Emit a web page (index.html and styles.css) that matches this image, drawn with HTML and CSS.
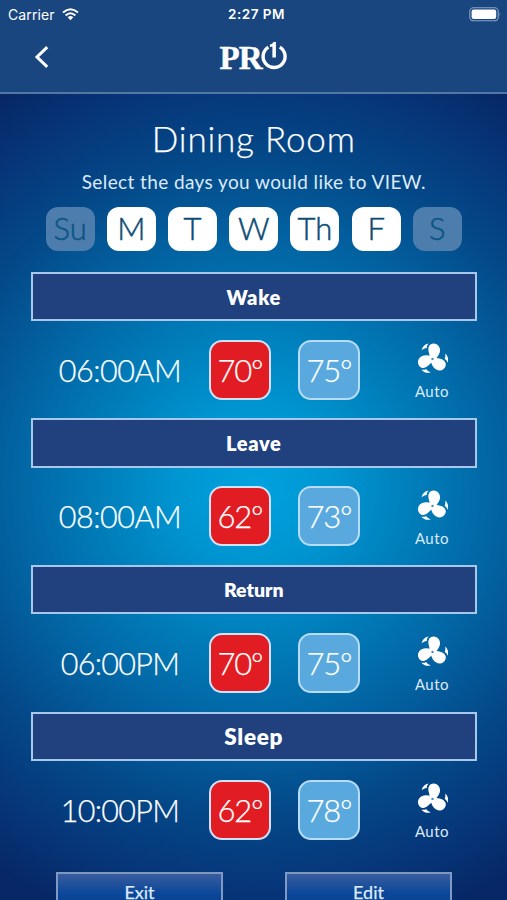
FILE: index.html
```html
<!DOCTYPE html>
<html lang="en">
<head>
<meta charset="utf-8">
<title>Dining Room schedule</title>
<link rel="stylesheet" href="styles.css">
</head>
<body>
<svg width="0" height="0" class="defs" aria-hidden="true">
  <symbol id="fan" viewBox="0 0 31 31">
    <g id="blade">
      <path d="M12.6 16C13.7 11.5 9.8 8 12 3.2C13.6 -.2 19.4 -.3 21.8 3.2C24.6 7.4 22.4 12.5 18.4 16Z"/>
      <path d="M4.6 7.4C5.3 3.7 7.9 1.3 11.6 .6C10 2.3 9.8 3.5 9.8 5C7.7 5.2 6.1 6 4.6 7.4Z"/>
    </g>
    <use href="#blade" transform="rotate(120 15.5 15.7)"/>
    <use href="#blade" transform="rotate(240 15.5 15.7)"/>
    <circle cx="15.5" cy="15.9" r="1.2" fill="#3f8fc5"/>
  </symbol>
</svg>
<header class="top">
  <div class="status">
    <div class="carrier"><span>Carrier</span>
      <svg width="17" height="13" viewBox="0 0 17 13" fill="none" stroke="#fff" stroke-width="2"><path d="M1 4.6Q8.5-2.2 16 4.6M3.6 7.4Q8.5 3 13.4 7.4"/><path d="M5.7 9.2Q8.5 7 11.3 9.2L8.5 12.2Z" fill="#fff" stroke="none"/></svg>
    </div>
    <span class="clock">2:27 PM</span>
    <svg class="battery" width="33" height="15" viewBox="0 0 33 15"><rect x=".8" y=".8" width="28.4" height="13" rx="3.6" fill="none" stroke="#8ba5c8" stroke-width="1.1"/><rect x="2.6" y="2.6" width="24.6" height="9.4" rx="2" fill="#fff"/><path d="M30.6 5Q32.2 7.3 30.6 9.6Z" fill="#8ba5c8"/></svg>
  </div>
  <div class="nav">
    <svg class="back" width="16" height="24" viewBox="0 0 16 24"><path d="M13.2 2.2L3 12L13.2 21.8" fill="none" stroke="#fff" stroke-width="3"/></svg>
    <div class="logo"><span>PR</span><svg width="28" height="29" viewBox="0 0 28 29"><path d="M8.4 6.1A11 11 0 1 0 19.8 6.1" fill="none" stroke="#fff" stroke-width="3.4"/><path d="M15.9 1V16.4H12.4V5.4L9.9 6V3.6C11.6 3.2 12.8 2.3 13.4 1Z" fill="#fff"/></svg></div>
  </div>
</header>
<main>
  <h1>Dining Room</h1>
  <p class="hint">Select the days you would like to VIEW.</p>
  <div class="days">
    <span class="day off">Su</span><span class="day">M</span><span class="day">T</span><span class="day">W</span><span class="day">Th</span><span class="day">F</span><span class="day off">S</span>
  </div>
  <section><h2>Wake</h2>
    <div class="row"><span class="time">06:00AM</span><span class="temp heat">70º</span><span class="temp cool">75º</span><div class="fan"><svg width="31" height="31"><use href="#fan"/></svg><span>Auto</span></div></div>
  </section>
  <section><h2>Leave</h2>
    <div class="row"><span class="time">08:00AM</span><span class="temp heat">62º</span><span class="temp cool">73º</span><div class="fan"><svg width="31" height="31"><use href="#fan"/></svg><span>Auto</span></div></div>
  </section>
  <section><h2 class="return">Return</h2>
    <div class="row"><span class="time pm">06:00PM</span><span class="temp heat">70º</span><span class="temp cool">75º</span><div class="fan"><svg width="31" height="31"><use href="#fan"/></svg><span>Auto</span></div></div>
  </section>
  <section><h2 class="large">Sleep</h2>
    <div class="row"><span class="time pm">10:00PM</span><span class="temp heat">62º</span><span class="temp cool">78º</span><div class="fan"><svg width="31" height="31"><use href="#fan"/></svg><span>Auto</span></div></div>
  </section>
  <div class="actions"><button>Exit</button><button>Edit</button></div>
</main>
</body>
</html>
```
FILE: styles.css
```css
* { box-sizing: border-box; }
body {
  margin: 0;
  height: 900px;
  overflow: hidden;
  color: #fff;
  font-family: Lato, "Liberation Sans", sans-serif;
  font-weight: 300;
  background: radial-gradient(circle at 256px 485px, #00a2df 0, #0095d1 80px, #007cb8 165px, #0362a1 250px, #044888 330px, #06387b 395px, #072766 465px);
}
.defs { position: absolute; }
.top { height: 94px; background: #1a467f; border-bottom: 2px solid #5478a5; }
.status {
  height: 28px;
  display: grid;
  grid-template-columns: 1fr auto 1fr;
  align-items: center;
  padding: 0 5px 0 8px;
  font: 400 14px Inter, sans-serif;
}
.carrier { display: flex; align-items: center; gap: 7px; letter-spacing: .1px; }
.clock { font-weight: 600; font-size: 13.5px; letter-spacing: .5px; padding-left: 3px; }
.battery { justify-self: end; }
.nav { display: grid; grid-template-columns: 1fr auto 1fr; align-items: center; height: 58px; }
.back { margin-left: 34px; }
.logo { display: flex; align-items: center; font: bold 33px/30px "Liberation Serif", serif; letter-spacing: -1px; -webkit-text-stroke: .4px; }
.logo span { margin-top: 1px; }
.logo svg { margin: -3px 0 0 -2px; }
main { padding: 0 30.5px 0 31px; -webkit-text-stroke: .25px; }
h1 { margin: 0; padding-top: 23px; font-weight: 300; font-size: 35px; line-height: 42px; text-align: center; letter-spacing: .8px; }
.hint { margin: 10px 0 0; font-size: 19px; line-height: 26px; font-weight: 400; text-align: center; letter-spacing: .4px; color: #dceafa; -webkit-text-stroke: 0; }
.days { display: flex; gap: 12.2px; justify-content: center; margin-top: 12px; }
.day { width: 49px; height: 44px; border-radius: 12px; background: #fff; color: #0c4c75; font-size: 31px; line-height: 43px; text-align: center; -webkit-text-stroke: .5px; }
.off { background: #4c7dad; color: #0c5585; }
section { height: 146.7px; }
.days + section { margin-top: 20.5px; }
h2 {
  margin: 0;
  height: 49.5px;
  border: 2px solid #a7c8ea;
  background: #20417d;
  font-size: 20px;
  font-weight: 800;
  line-height: 46px;
  text-align: center;
  letter-spacing: .7px;
  -webkit-text-stroke: 0;
}
.return { font-size: 19.5px; letter-spacing: 0; }
.large { font-size: 22.5px; }
.row { display: flex; align-items: center; height: 97px; }
.time { width: 178px; text-align: center; font-size: 30.5px; letter-spacing: -.5px; }
.pm { letter-spacing: -.7px; }
.temp { width: 62px; height: 60px; border: 2px solid #cfe2f7; border-radius: 13px; font-size: 31px; line-height: 56px; text-align: center; letter-spacing: -1.2px; }
.heat { background: #e11d23; }
.cool { margin-left: 27px; background: #59a9df; border-color: #b8dcf6; }
.fan { display: flex; flex-direction: column; align-items: center; width: 62px; margin: 5px 0 0 41px; }
.fan svg { fill: #fff; }
.fan span { margin-top: 7px; font-size: 15px; line-height: 20px; font-weight: 400; letter-spacing: .5px; color: #dceafa; -webkit-text-stroke: 0; }
.actions { display: flex; gap: 62px; margin: 13.5px 0 0 25px; }
button {
  width: 167px;
  height: 44px;
  padding: 0 0 4px;
  border: 2px solid #8099c3;
  background: linear-gradient(#395d9e, #0b479a 48%, #063c88);
  color: #dceafa;
  font: 400 18px/20px Lato, sans-serif;
}
```
